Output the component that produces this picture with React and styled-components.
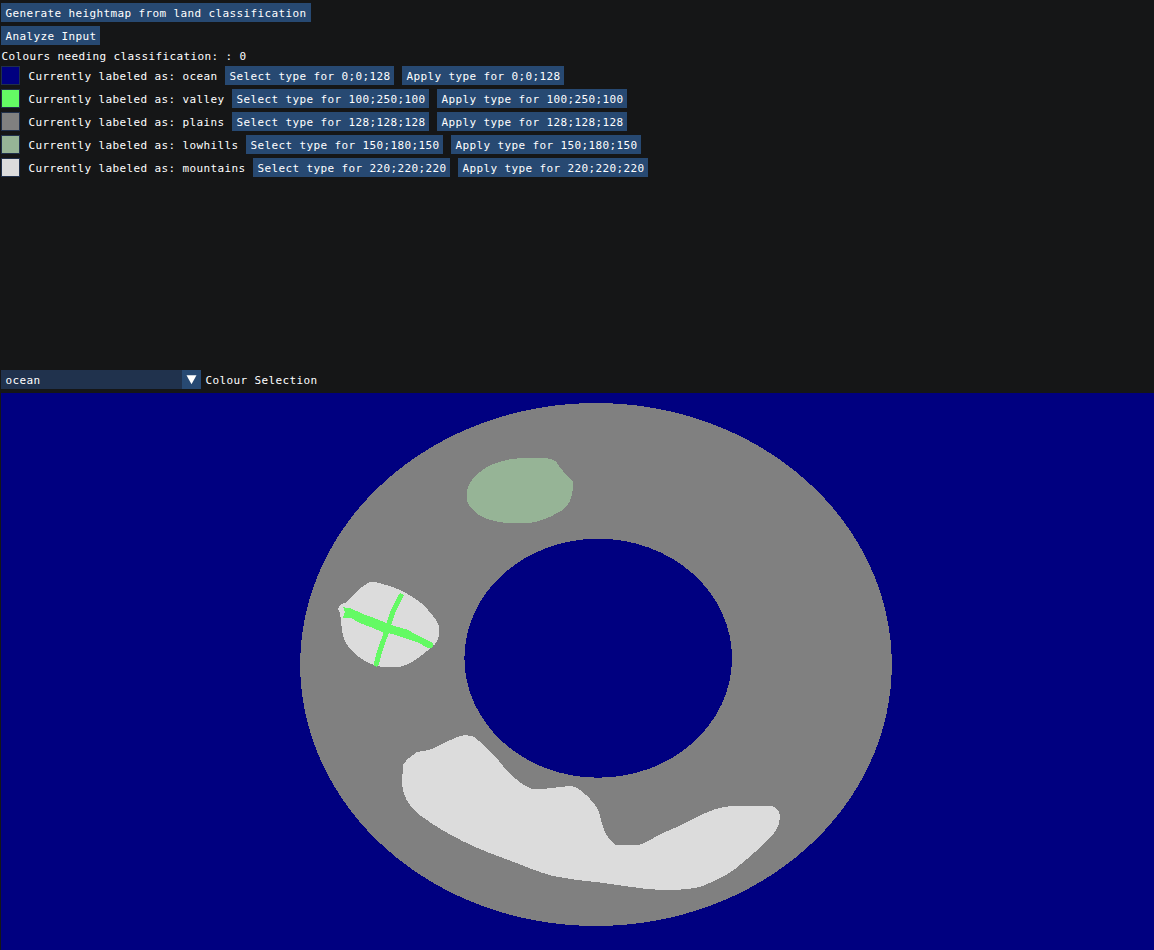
import React from "react";
import styled, { createGlobalStyle } from "styled-components";

const Global = createGlobalStyle`
  * { box-sizing: border-box; }
  html, body { margin: 0; background: #151617; overflow: hidden; }
`;

const Window = styled.main`
  display: flex;
  flex-direction: column;
  width: 1154px;
  height: 950px;
  padding: 3px 0 0 1px;
  overflow: hidden;
  background: #151617;
  color: #fff;
  font-family: "DejaVu Sans Mono", monospace;
  font-size: 11px;
  letter-spacing: 0.378px;
  line-height: 13px;
  white-space: pre;
`;

const Panel = styled.section`
  display: flex;
  flex-direction: column;
  align-items: flex-start;
  gap: 4px;
  height: 367px;
`;

const Button = styled.button`
  height: 19px;
  width: ${(p) => p.$width}px;
  padding: 2px 0 0 4px;
  border: 0;
  background: #274972;
  color: inherit;
  font: inherit;
  letter-spacing: inherit;
  line-height: 17px;
  text-align: left;
  text-indent: 0.4px;
  white-space: pre;
`;

const Text = styled.span`
  height: ${(p) => p.$height || 19}px;
  line-height: ${(p) => (p.$height || 19) + 3}px;
  text-indent: 0.4px;
`;

const Row = styled.div`
  display: flex;
  align-items: center;
  gap: 8px;
`;

const Swatch = styled.span`
  width: 19px;
  height: 19px;
  border: 1px solid #20304b;
  background: ${(p) => p.$color};
`;

const Label = styled(Text)`
  width: ${(p) => p.$chars * 7}px;
`;

const ComboRow = styled.div`
  display: flex;
  gap: 4px;
  height: 23px;
`;

const Combo = styled.div`
  display: flex;
  justify-content: space-between;
  width: 200px;
  height: 19px;
  padding-left: 4px;
  background: #20324d;
`;

const ComboArrow = styled.span`
  display: block;
  width: 19px;
  height: 19px;
  background: #274972;

  svg { display: block; }
`;

const MapView = styled.svg`
  display: block;
  flex: none;
  width: 1153px;
  height: 557px;
`;

const CLASSES = [
  ["ocean", [0, 0, 128]],
  ["valley", [100, 250, 100]],
  ["plains", [128, 128, 128]],
  ["lowhills", [150, 180, 150]],
  ["mountains", [220, 220, 220]],
];

function TextButton({ children, width }) {
  return <Button $width={width || children.length * 7 + 8}>{children}</Button>;
}

function ClassRow({ name, rgb }) {
  const label = `Currently labeled as: ${name}`;
  const key = rgb.join(";");
  return (
    <Row>
      <Swatch $color={`rgb(${rgb.join(",")})`} />
      <Label $chars={label.length}>{label}</Label>
      <TextButton>{`Select type for ${key}`}</TextButton>
      <TextButton>{`Apply type for ${key}`}</TextButton>
    </Row>
  );
}

function LandMap() {
  return (
    <MapView viewBox="1 393 1153 557" shapeRendering="crispEdges">
      <rect x="1" y="393" width="1153" height="557" fill="#000080" />
      <ellipse cx="596" cy="664.5" rx="295.800" ry="261.500" fill="#808080" />
      <ellipse cx="598.2" cy="658.2" rx="133.800" ry="119.500" fill="#000080" />
      <path
        fill="#96b496"
        d="M466.500 494C467 485 472 478 480 472C489 464 501 461 512 459C523 457.500 535 457.500 545 458C551 459 556 460 557 463C560 469 567 475 572.500 481V491C571 502 567 508 559 512C549 518 541 521 532 522.500C522 523.500 512 523.500 503 522.500C490 521 480 517 474 511C468 505 466.500 502 466.500 494Z"
      />
      <path
        fill="#dcdcdc"
        d="M369 582.500C373 581.500 377 582.500 381 583.500C396 587 410 594 421 603C430 611 436 619 439.300 626V635C438 643 433 646 427 651C417 659 410 665 399 667H382C369 665 357 657 350 649C343 641 341 632 341.300 618L339.500 616L340 613L338 609L341 604L345 603C354 595 361 586 369 582.500Z"
      />
      <path
        fill="none"
        stroke="#64fa64"
        strokeWidth="5"
        strokeLinecap="round"
        d="M401 596C396 605 391 614 389 624C386 636 379 649 376.500 664"
      />
      <path
        fill="#64fa64"
        d="M343 607.300L350 608L363 614L370 616.500L383 621.500L391 625L407 629.500L417 635L433 643V647L429 648.500L417 642L403 637.500L393 634L383 632.500L373 628L360 623L350 617.500H343L345 612Z"
      />
      <path
        fill="#dcdcdc"
        d="M403 765C407 758 412 756 417 752C423 751 430 750 434 748C442 744 452 739 460 736C465 735 470 735 474 737C481 742 491 752 497 758C502 766 509 773 516 779C523 785 530 789 535 789.500C544 789.500 555 787 571 786C578 786 585 794 591 800C600 809 600 817 602 824C605 835 610 841 616 845H639C648 842 654 837 663 833C675 828 687 823 697 817C709 811 719 807 731 806H772C777 807 780 812 780 817C780 829 773 834 767 841C757 850 747 860 735 869C724 877 712 882 700 887C686 890 674 890 661 890C640 889 620 885 600 882.500C584 881 568 879 553 876C537 872 520 864 503 858C486 852 467 844 451 835C438 828 428 821 417 813C409 806 402 794 402 784Z"
      />
    </MapView>
  );
}

export default function App() {
  return (
    <>
      <Global />
      <Window>
        <Panel>
          <TextButton width={310}>Generate heightmap from land classification</TextButton>
          <TextButton>Analyze Input</TextButton>
          <Text $height={13}>Colours needing classification: : 0</Text>
          {CLASSES.map(([name, rgb]) => (
            <ClassRow key={name} name={name} rgb={rgb} />
          ))}
        </Panel>
        <ComboRow>
          <Combo>
            <Text>ocean</Text>
            <ComboArrow>
              <svg width="19" height="19" viewBox="0 0 19 19">
                <path d="M4.500 5.200H14.500L9.500 14.200Z" fill="#fff" />
              </svg>
            </ComboArrow>
          </Combo>
          <Text>Colour Selection</Text>
        </ComboRow>
        <LandMap />
      </Window>
    </>
  );
}
